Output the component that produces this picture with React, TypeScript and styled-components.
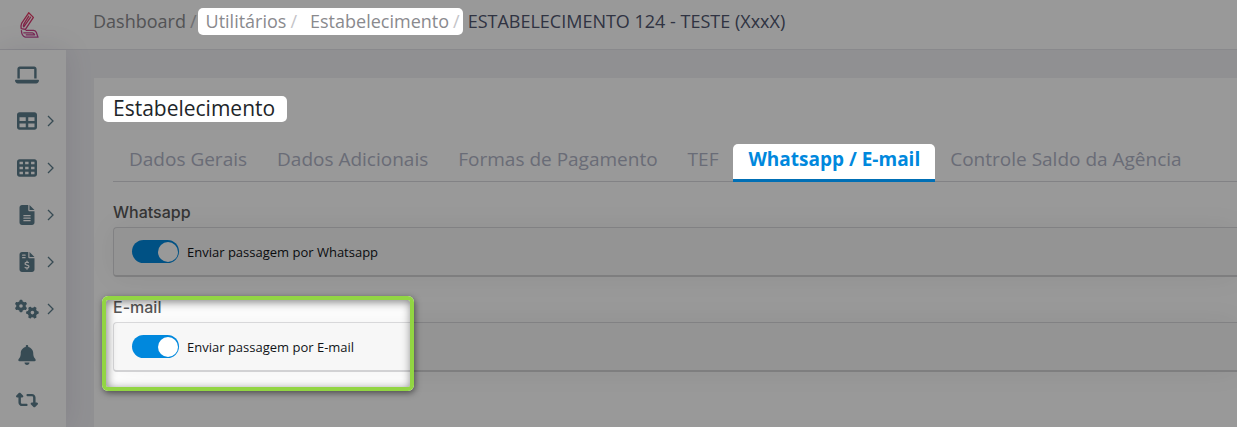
import React from "react";
import styled, { createGlobalStyle, css } from "styled-components";
import {
  FaLaptop,
  FaTable,
  FaTableCells,
  FaFileLines,
  FaFileInvoiceDollar,
  FaGears,
  FaBell,
  FaRetweet,
} from "react-icons/fa6";

const GlobalStyle = createGlobalStyle`
  * { box-sizing: border-box; }
  body {
    margin: 0;
    background: #999999;
    font-family: "Open Sans", "Liberation Sans", sans-serif;
    color: #212529;
  }
`;

const Page = styled.div`
  position: relative;
  min-height: 100vh;
  overflow: hidden;
  display: flex;
  flex-direction: column;
  background: #f0f0f4;
`;

const TopBar = styled.header`
  display: flex;
  align-items: stretch;
  height: 50px;
  background: #fff;
  border-bottom: 1px solid #e4e4ea;
`;

const LogoLink = styled.a`
  width: 66px;
  padding: 11px 0 0 19px;
  flex: none;
`;

const Breadcrumb = styled.nav`
  display: flex;
  align-items: center;
  padding: 0 0 6px 27px;
  font-size: 18px;
  line-height: 27px;
  white-space: nowrap;
`;

/* Lifts an element above the dimming layer of the tour. */
const spotlight = css`
  position: relative;
  z-index: 2;
  background: #fff;
  border-radius: 5px;
`;

const CrumbLink = styled.a`
  color: #8a8a8e;
  text-decoration: none;
`;

const Slash = styled.span`
  color: #b8b8bc;
  margin: 0 1px 0 4px;
`;

const CrumbGroup = styled.span`
  ${spotlight}
  display: flex;
  padding: 0 3px 0 8px;
  margin-right: 5px;
`;

const GroupSlash = styled.span<{ $last?: boolean }>`
  color: #c4c4c8;
  margin: ${(p) => (p.$last ? "0 0 0 4px" : "0 13px 0 4px")};
`;

const Current = styled.span`
  color: #50566e;
`;

const Body = styled.div`
  display: flex;
  flex: 1;
`;

const Sidebar = styled.nav`
  width: 66px;
  flex: none;
  padding-top: 2px;
  background: #fff;
  box-shadow: 0 0 28px rgba(82, 63, 105, 0.13);
`;

const SideItem = styled.button<{ $sub?: boolean }>`
  display: flex;
  align-items: center;
  width: 100%;
  height: ${(p) => (p.$sub ? 47 : 45)}px;
  padding: 0 0 0 15px;
  gap: 7px;
  border: 0;
  background: none;
  color: #5d7d8c;
`;

const SideIcon = styled.span<{ $size: number }>`
  display: flex;
  justify-content: center;
  width: 24px;
  font-size: ${(p) => p.$size}px;
`;

const Main = styled.main`
  flex: 1;
  min-width: 0;
  display: flex;
  padding: 28px 0 0 28px;
`;

const Card = styled.section`
  flex: 1;
  min-width: 0;
  background: #fff;
  padding: 18px 0 0 19px;
`;

const Title = styled.h1`
  ${spotlight}
  width: fit-content;
  margin: 0 0 0 -10px;
  padding: 0 12px 1px 10px;
  font-size: 21px;
  line-height: 25px;
  font-weight: 400;
`;

const Tabs = styled.div`
  display: flex;
  margin-top: 22px;
  height: 38px;
  padding-left: 1px;
  border-bottom: 1px solid #d9d9de;
  white-space: nowrap;
`;

const Tab = styled.button<{ $active?: boolean }>`
  height: 38px;
  border: 0;
  padding: 0 15px 9px;
  background: none;
  font-family: inherit;
  font-size: 19px;
  line-height: 26px;
  color: #b0b4c6;
  ${(p) =>
    p.$active &&
    css`
      ${spotlight}
      border-radius: 5px 5px 0 0;
      border-bottom: 3px solid #006fb5;
      padding-bottom: 6px;
      font-weight: 700;
      color: #0088dd;
    `}
`;

const Section = styled.section`
  position: relative;
  padding-top: 20px;
`;

const SectionTitle = styled.h2`
  margin: 0 0 5px;
  font-family: Inter, "Open Sans", sans-serif;
  font-size: 16px;
  line-height: 20px;
  font-weight: 500;
  color: #575757;
`;

const Panel = styled.div`
  display: flex;
  align-items: center;
  height: 50px;
  padding-left: 18px;
  background: #f7f7f7;
  border: 1px solid #d8d8da;
  border-bottom: 2px solid #d2d2d4;
  border-right: 0;
  border-radius: 4px 0 0 4px;
  box-shadow: 0 0 28px rgba(0, 0, 0, 0.06);
`;

const SwitchLabel = styled.label`
  display: flex;
  align-items: center;
  gap: 8px;
  font-size: 13px;
  line-height: 20px;
  color: #111418;
`;

const Switch = styled.input`
  appearance: none;
  width: 47px;
  height: 23px;
  margin: 0;
  display: flex;
  align-items: center;
  padding: 1px;
  border-radius: 12px;
  background: #b8bcc8;
  &::before {
    content: "";
    width: 20px;
    height: 20px;
    border-radius: 50%;
    background: #fff;
  }
  &:checked {
    background: #0088dd;
    justify-content: flex-end;
  }
`;

/* Green frame of the tour step; its spread shadow dims the rest of the page. */
const TourFrame = styled.div`
  position: absolute;
  z-index: 1;
  left: -11px;
  top: 19px;
  width: 312px;
  height: 95px;
  border-radius: 6px;
  pointer-events: none;
  box-shadow: 0 0 0 3000px rgba(0, 0, 0, 0.4);
  &::after {
    content: "";
    position: absolute;
    inset: 0;
    border: 4px solid #92d543;
    border-radius: 6px;
    box-shadow: 1px 2px 6px rgba(0, 0, 0, 0.5), inset 1px 2px 10px rgba(0, 0, 0, 0.5);
  }
`;

const Logo = () => (
  <svg width="21" height="28" viewBox="0 0 21 28" fill="none" aria-hidden="true">
    <defs>
      <linearGradient id="brand" gradientUnits="userSpaceOnUse" x1="0" y1="1" x2="0" y2="27">
        <stop offset="0" stopColor="#e83a60" />
        <stop offset="0.6" stopColor="#d0387c" />
        <stop offset="1" stopColor="#c44a9c" />
      </linearGradient>
    </defs>
    <g stroke="url(#brand)" strokeWidth="1.3" strokeLinejoin="round" strokeLinecap="round">
      <path d="M9.7 1.8 L2.6 12.4 Q1.4 15.4 2.2 17.6 L6.4 18.4 L14.4 6.4 Z" />
      <path d="M9.8 5.2 L5 12.8 Q4 14.8 4.8 15.8 L11.6 6.2" />
      <path d="M2.4 19.6 Q2.6 25 6.2 26.2 H19 L17.4 21.6 Q16.6 19.6 14.6 19.4 H7.2" />
      <path d="M4.8 21.8 H13.4 Q15 22 15.6 23.8 H7.2" />
    </g>
  </svg>
);

const Chevron = () => (
  <svg width="9" height="12" viewBox="0 0 9 12" fill="none" aria-hidden="true">
    <path d="M2 1 L7 6 L2 11" stroke="currentColor" strokeWidth="1.3" />
  </svg>
);

const menu = [
  { label: "Painel", Icon: FaLaptop, size: 24 },
  { label: "Tabelas", Icon: FaTable, size: 20, sub: true },
  { label: "Grades", Icon: FaTableCells, size: 20, sub: true },
  { label: "Documentos", Icon: FaFileLines, size: 20, sub: true },
  { label: "Faturas", Icon: FaFileInvoiceDollar, size: 20, sub: true },
  { label: "Configurações", Icon: FaGears, size: 24, sub: true },
  { label: "Notificações", Icon: FaBell, size: 20 },
  { label: "Trocas", Icon: FaRetweet, size: 22 },
];

const tabs = [
  "Dados Gerais",
  "Dados Adicionais",
  "Formas de Pagamento",
  "TEF",
  "Whatsapp / E-mail",
  "Controle Saldo da Agência",
];

export default function App() {
  const [active, setActive] = React.useState(4);
  return (
    <Page>
      <GlobalStyle />
      <TopBar>
        <LogoLink href="#" aria-label="Início">
          <Logo />
        </LogoLink>
        <Breadcrumb>
          <CrumbLink href="#">Dashboard</CrumbLink>
          <Slash>/</Slash>
          <CrumbGroup>
            <CrumbLink href="#">Utilitários</CrumbLink>
            <GroupSlash>/</GroupSlash>
            <CrumbLink href="#">Estabelecimento</CrumbLink>
            <GroupSlash $last>/</GroupSlash>
          </CrumbGroup>
          <Current>ESTABELECIMENTO 124 - TESTE (XxxX)</Current>
        </Breadcrumb>
      </TopBar>
      <Body>
        <Sidebar>
          {menu.map(({ label, Icon, size, sub }) => (
            <SideItem key={label} type="button" aria-label={label} $sub={sub}>
              <SideIcon $size={size}>
                <Icon />
              </SideIcon>
              {sub && <Chevron />}
            </SideItem>
          ))}
        </Sidebar>
        <Main>
          <Card>
            <Title>Estabelecimento</Title>
            <Tabs role="tablist">
              {tabs.map((name, i) => (
                <Tab
                  key={name}
                  type="button"
                  role="tab"
                  aria-selected={i === active}
                  $active={i === active}
                  onClick={() => setActive(i)}
                >
                  {name}
                </Tab>
              ))}
            </Tabs>
            <Section>
              <SectionTitle>Whatsapp</SectionTitle>
              <Panel>
                <SwitchLabel>
                  <Switch type="checkbox" role="switch" defaultChecked />
                  Enviar passagem por Whatsapp
                </SwitchLabel>
              </Panel>
            </Section>
            <Section>
              <SectionTitle>E-mail</SectionTitle>
              <Panel>
                <SwitchLabel>
                  <Switch type="checkbox" role="switch" defaultChecked />
                  Enviar passagem por E-mail
                </SwitchLabel>
              </Panel>
              <TourFrame />
            </Section>
          </Card>
        </Main>
      </Body>
    </Page>
  );
}
